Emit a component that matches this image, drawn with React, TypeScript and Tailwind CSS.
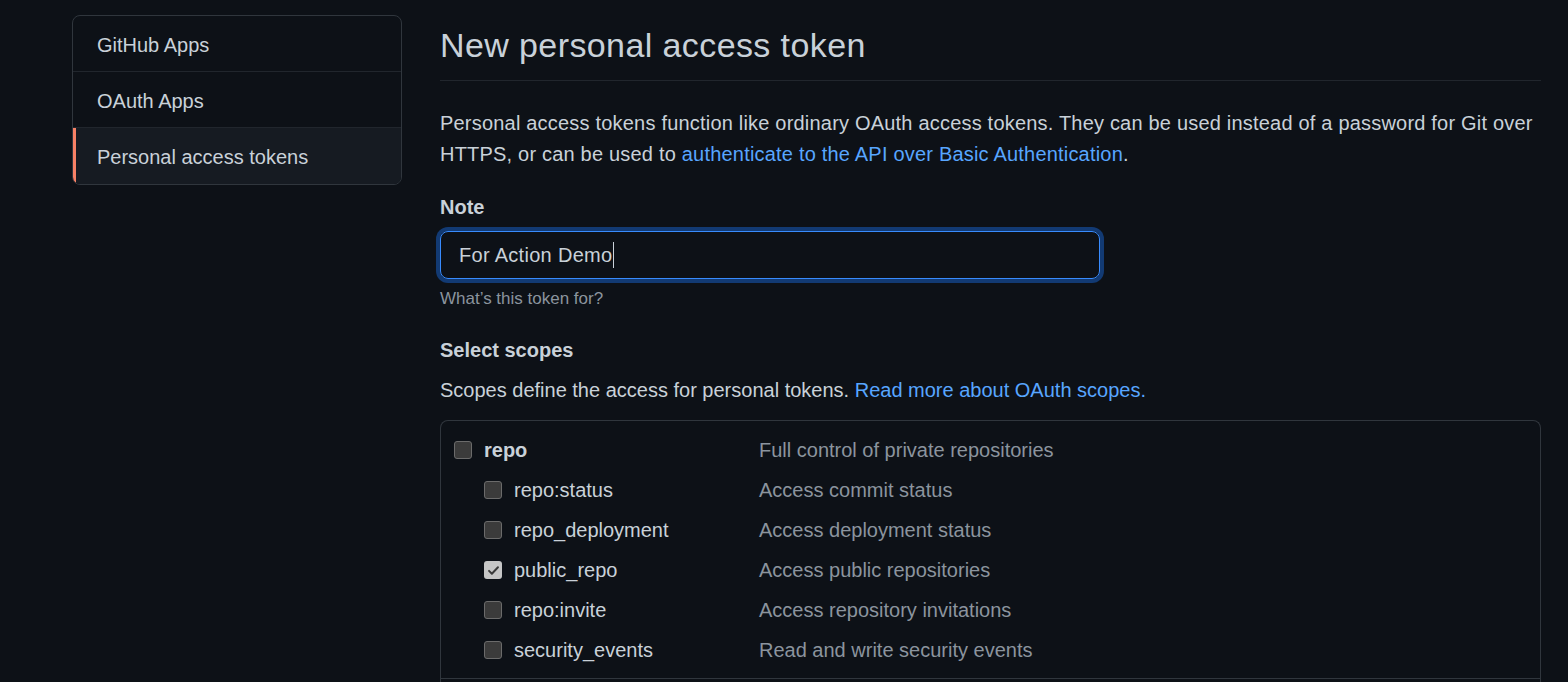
import React from "react";

const sideItems = [
  { label: "GitHub Apps", active: false },
  { label: "OAuth Apps", active: false },
  { label: "Personal access tokens", active: true },
];

const subScopes = [
  { name: "repo:status", desc: "Access commit status", checked: false },
  { name: "repo_deployment", desc: "Access deployment status", checked: false },
  { name: "public_repo", desc: "Access public repositories", checked: true },
  { name: "repo:invite", desc: "Access repository invitations", checked: false },
  { name: "security_events", desc: "Read and write security events", checked: false },
];

function Checkbox({ checked }: { checked?: boolean }) {
  if (checked) {
    return (
      <span className="flex h-[18px] w-[18px] shrink-0 items-center justify-center rounded-[3px] bg-[#c6c6c6]">
        <svg width="13" height="13" viewBox="0 0 16 16" fill="none">
          <path d="M2.5 8.5l3.5 3.5 7.5-8" stroke="#3a3a3a" strokeWidth="2.4" strokeLinecap="round" strokeLinejoin="round" />
        </svg>
      </span>
    );
  }
  return <span className="block h-[18px] w-[18px] shrink-0 rounded-[3px] border border-[#6b6b6b] bg-[#3b3b3b]" />;
}

export default function App() {
  return (
    <div
      className="min-h-screen w-full bg-[#0d1117] text-[#c9d1d9] overflow-hidden"
      style={{ fontFamily: '"Liberation Sans", Arial, sans-serif' }}
    >
      <div className="flex pl-[72px] pt-[15px] gap-[38px]">
        {/* sidebar */}
        <nav className="w-[330px] shrink-0 self-start overflow-hidden rounded-[8px] border border-[#30363d]">
          {sideItems.map((item, i) => (
            <div
              key={item.label}
              className={`flex h-[56px] items-center pt-[2px] text-[20px] ${
                i < sideItems.length - 1 ? "border-b border-[#21262d]" : ""
              } ${item.active ? "bg-[#161b22] border-l-[3px] border-l-[#f78166] pl-[21px]" : "pl-[24px]"}`}
            >
              {item.label}
            </div>
          ))}
        </nav>

        {/* main */}
        <main className="w-[1101px] shrink-0">
          <div className="mt-[8px] border-b border-[#21262d] pb-[13px]">
            <h1 className="text-[34px] font-normal leading-[44px] tracking-[0.4px] text-[#c9d1d9]">
              New personal access token
            </h1>
          </div>

          <p className="mt-[27px] text-[20px] leading-[31px] tracking-[0.2px]">
            Personal access tokens function like ordinary OAuth access tokens. They can be used instead of a password for Git over
            HTTPS, or can be used to{" "}
            <span className="text-[#58a6ff]">authenticate to the API over Basic Authentication</span>.
          </p>

          <div className="mt-[22px] text-[20px] font-bold leading-[31px]">Note</div>
          <div className="mt-[8px] w-[660px] rounded-[8px] shadow-[0_0_0_4px_#123a73]">
            <div className="flex h-[48px] items-center rounded-[8px] border-[1.5px] border-[#388bfd] bg-[#0d1117] pl-[18px] text-[20px] tracking-[0.3px]">
              <span>For Action Demo</span>
              <span className="ml-[1px] h-[26px] w-px bg-[#c9d1d9]" />
            </div>
          </div>
          <div className="mt-[7px] text-[17px] leading-[25px] text-[#8b949e]">What’s this token for?</div>

          <div className="mt-[24px] text-[20px] font-bold leading-[31px]">Select scopes</div>
          <p className="mt-[9px] text-[20px] leading-[31px]">
            Scopes define the access for personal tokens.{" "}
            <span className="text-[#58a6ff]">Read more about OAuth scopes.</span>
          </p>

          <div className="mt-[14px] rounded-t-[8px] border border-b-0 border-[#30363d]">
            <div className="border-b border-[#30363d] pt-[9px] pb-[8px]">
              <div className="flex h-[40px] items-center">
                <div className="flex w-[318px] items-center pl-[13px]">
                  <Checkbox />
                  <span className="ml-[12px] text-[20px] font-bold">repo</span>
                </div>
                <span className="text-[20px] text-[#8b949e]">Full control of private repositories</span>
              </div>
              {subScopes.map((s) => (
                <div key={s.name} className="flex h-[40px] items-center">
                  <div className="flex w-[318px] items-center pl-[43px]">
                    <Checkbox checked={s.checked} />
                    <span className="ml-[12px] text-[20px]">{s.name}</span>
                  </div>
                  <span className="text-[20px] text-[#8b949e]">{s.desc}</span>
                </div>
              ))}
            </div>
            <div className="h-[40px]" />
          </div>
        </main>
      </div>
    </div>
  );
}
